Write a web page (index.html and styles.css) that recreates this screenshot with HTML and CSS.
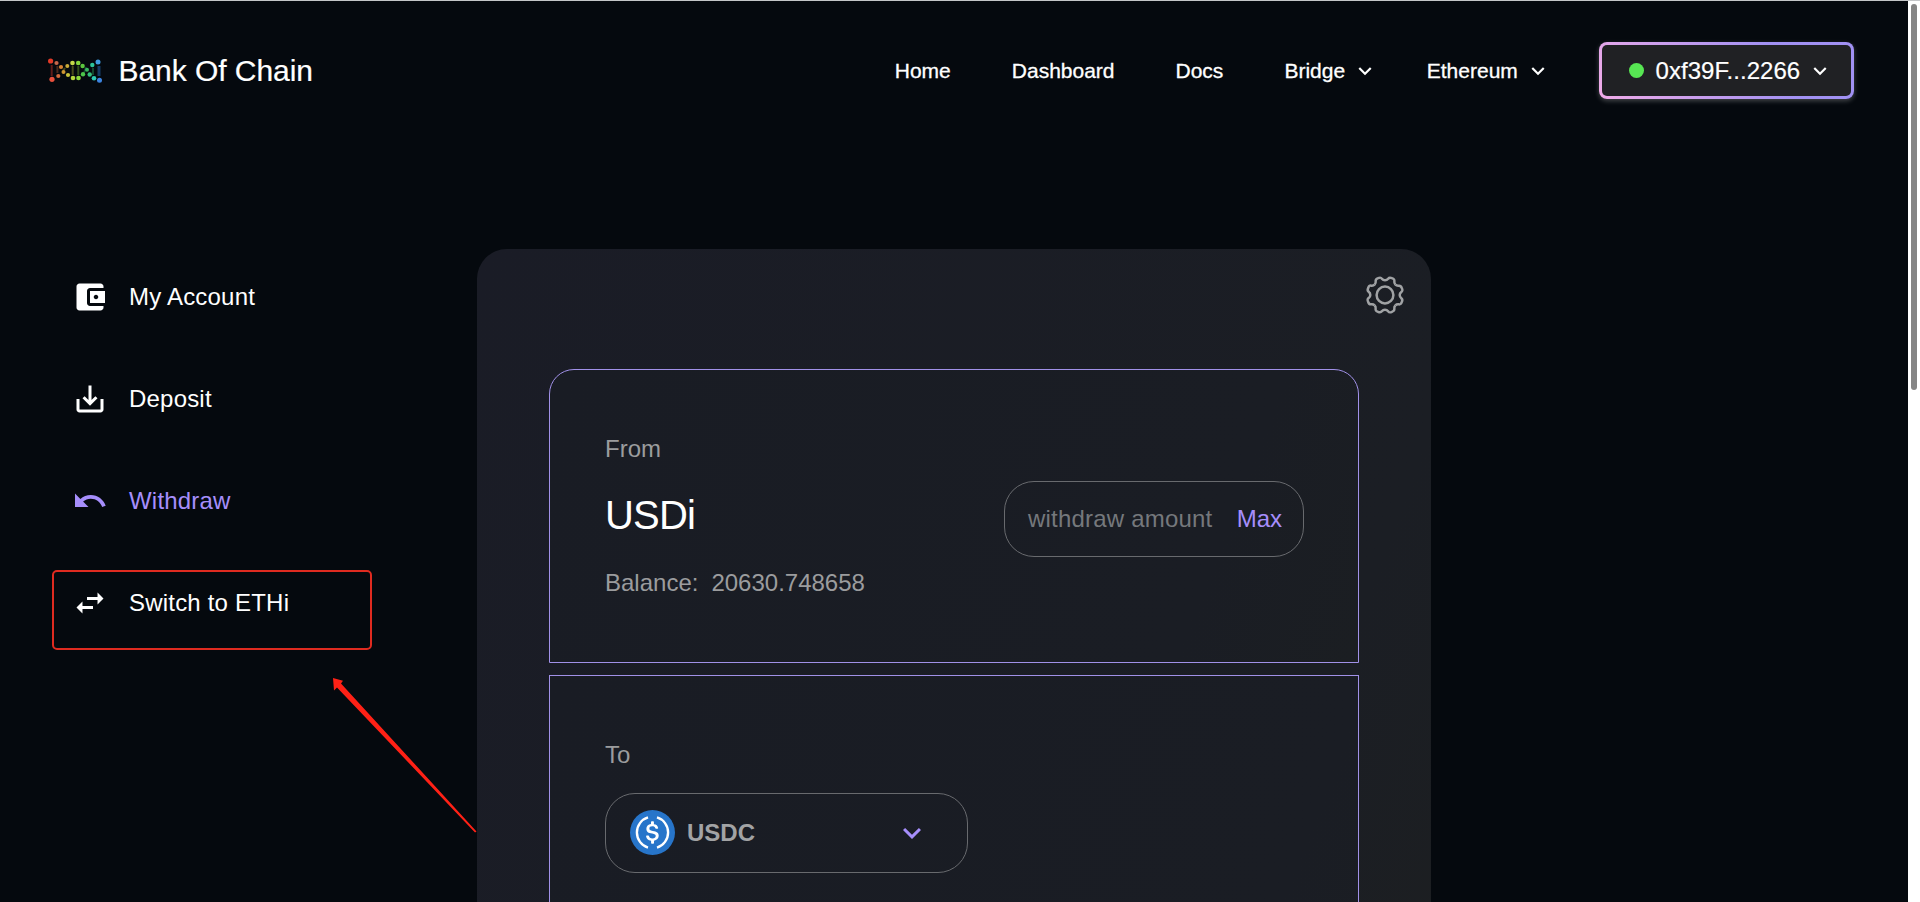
FILE: index.html
```html
<!DOCTYPE html>
<html lang="en">
<head>
<meta charset="utf-8">
<title>Bank Of Chain</title>
<link rel="stylesheet" href="styles.css">
</head>
<body>
<svg class="defs" aria-hidden="true">
  <symbol id="expand" viewBox="0 0 24 24"><path d="M16.59 8.59 12 13.17 7.41 8.59 6 10l6 6 6-6z"/></symbol>
</svg>
<div class="window">
  <div class="app">
    <header class="header">
      <a class="brand">
        <svg class="logo" viewBox="0 0 54 28">
          <g stroke-width="2" opacity=".42">
            <path stroke="#e0392b" d="M3.700 8v11"/>
            <path stroke="#a8552f" d="M9.400 9v7"/>
            <path stroke="#a8a82c" d="M17 11l-2 3M24.700 9v9"/>
            <path stroke="#6fae2c" d="M30.300 9v9"/>
            <path stroke="#2c9c5c" d="M38 10l-2 6M45 11v7"/>
            <path stroke="#2f7fd8" stroke-width="3" d="M51 9v10"/>
          </g>
          <circle cx="2.600" cy="4" r="2.600" fill="#e33a28"/><circle cx="4" cy="22.300" r="2.600" fill="#e8503c"/>
          <circle cx="8.500" cy="6" r="2.100" fill="#c8664a"/><circle cx="10.300" cy="19" r="2.100" fill="#d06a3c"/>
          <circle cx="13" cy="10" r="2.100" fill="#d98432"/><circle cx="15.500" cy="15" r="2" fill="#cf9632"/>
          <circle cx="19.300" cy="9" r="2" fill="#c9ab38"/><circle cx="20" cy="18" r="2.100" fill="#c9c43a"/>
          <circle cx="24.500" cy="6" r="2.300" fill="#c6d84a"/><circle cx="25" cy="21" r="2.300" fill="#b4d83c"/>
          <circle cx="30.200" cy="6" r="2.300" fill="#86d63c"/><circle cx="30.500" cy="21" r="2.300" fill="#8cdc3c"/>
          <circle cx="34.600" cy="9" r="2.200" fill="#5cc63e"/><circle cx="35" cy="17.300" r="2.200" fill="#4cc64a"/>
          <circle cx="39" cy="12.800" r="2" fill="#38b85e"/><circle cx="41.700" cy="17.500" r="2.200" fill="#34c07c"/>
          <circle cx="44.300" cy="8" r="2.200" fill="#2cc49a"/><circle cx="46" cy="21.300" r="2.300" fill="#2cc8b4"/>
          <circle cx="50" cy="5" r="2.500" fill="#3f9be0"/><circle cx="51.500" cy="23.300" r="2.500" fill="#3c84e0"/>
        </svg>
        <span class="brand-name">Bank Of Chain</span>
      </a>
      <nav class="nav">
        <a class="nav-link">Home</a>
        <a class="nav-link">Dashboard</a>
        <a class="nav-link">Docs</a>
        <a class="nav-menu">Bridge <svg class="caret"><use href="#expand"/></svg></a>
        <a class="nav-menu">Ethereum <svg class="caret"><use href="#expand"/></svg></a>
        <button class="wallet"><i class="status"></i><span class="address">0xf39F...2266</span><svg class="caret"><use href="#expand"/></svg></button>
      </nav>
    </header>
    <div class="content">
      <aside class="sidebar">
        <a class="side-item"><svg class="side-icon" viewBox="0 0 24 24"><path d="M21 18v1c0 1.100-.9 2-2 2H5c-1.110 0-2-.9-2-2V5c0-1.100.89-2 2-2h14c1.100 0 2 .9 2 2v1h-9c-1.110 0-2 .9-2 2v8c0 1.100.89 2 2 2h9zm-9-2h10V8H12v8zm4-2.500c-.83 0-1.500-.67-1.500-1.500s.67-1.500 1.500-1.500 1.500.67 1.500 1.500-.67 1.500-1.500 1.500z"/></svg>My Account</a>
        <a class="side-item"><svg class="side-icon" viewBox="0 0 24 24"><path d="M19 12v7H5v-7H3v7c0 1.100.9 2 2 2h14c1.100 0 2-.9 2-2v-7h-2zm-6 .67 2.590-2.580L17 11.500l-5 5-5-5 1.410-1.410L11 12.670V3h2z"/></svg>Deposit</a>
        <a class="side-item active"><svg class="side-icon" viewBox="0 0 24 24"><path d="M12.500 8c-2.650 0-5.050.99-6.900 2.600L2 7v9h9l-3.620-3.620c1.390-1.160 3.160-1.880 5.120-1.880 3.540 0 6.550 2.310 7.600 5.500l2.370-.78C21.080 11.030 17.150 8 12.500 8z"/></svg>Withdraw</a>
        <a class="side-item"><svg class="side-icon" viewBox="0 0 24 24"><path d="M6.990 11 3 15l3.990 4v-3H14v-2H6.990v-3zM21 9l-3.990-4v3H10v2h7.010v3L21 9z"/></svg>Switch to ETHi</a>
      </aside>
      <main class="card">
        <div class="toolbar">
          <svg class="gear" viewBox="-20 -20 40 40">
            <defs><path id="tooth" d="M0-14.700C4.200-14.700 2.400-19 6.960-16.810C11.860-15.140 7.420-13.360 10.390-10.390"/></defs>
            <use href="#tooth"/><use href="#tooth" transform="rotate(45)"/><use href="#tooth" transform="rotate(90)"/><use href="#tooth" transform="rotate(135)"/><use href="#tooth" transform="rotate(180)"/><use href="#tooth" transform="rotate(225)"/><use href="#tooth" transform="rotate(270)"/><use href="#tooth" transform="rotate(315)"/>
            <circle r="8.400"/>
          </svg>
        </div>
        <section class="panel panel-from">
          <p class="label">From</p>
          <div class="row">
            <h2 class="token">USDi</h2>
            <div class="amount"><span class="placeholder">withdraw amount</span><span class="max">Max</span></div>
          </div>
          <p class="label balance"><span>Balance:</span><span>20630.748658</span></p>
        </section>
        <section class="panel panel-to">
          <p class="label">To</p>
          <div class="select">
            <svg class="coin" viewBox="0 0 32 32"><circle cx="16" cy="16" r="16" fill="#2775ca"/><path fill="#fff" transform="translate(-1.600 -1.600) scale(1.100)" d="M20.022 18.124c0-2.124-1.280-2.852-3.840-3.156-1.828-.243-2.193-.728-2.193-1.578 0-.85.61-1.396 1.828-1.396 1.097 0 1.707.364 2.011 1.275a.458.458 0 00.427.303h.975a.416.416 0 00.427-.425v-.06a3.040 3.040 0 00-2.743-2.489V9.142c0-.243-.183-.425-.487-.486h-.915c-.243 0-.426.182-.487.486v1.396c-1.829.242-2.986 1.456-2.986 2.974 0 2.002 1.218 2.791 3.778 3.095 1.707.303 2.255.668 2.255 1.639 0 .97-.853 1.638-2.011 1.638-1.585 0-2.133-.667-2.316-1.578-.06-.242-.244-.364-.427-.364h-1.036a.416.416 0 00-.426.425v.06c.243 1.518 1.219 2.610 3.230 2.914v1.457c0 .242.183.425.487.485h.915c.243 0 .426-.182.487-.485V21.340c1.829-.303 3.047-1.578 3.047-3.217z"/><path fill="none" stroke="#fff" stroke-width="1.700" d="M12.800 5.300A11.200 11.200 0 0 0 12.800 26.700M19.200 5.300A11.200 11.200 0 0 1 19.200 26.700"/></svg>
            <b class="coin-name">USDC</b>
            <svg class="select-caret"><use href="#expand"/></svg>
          </div>
        </section>
      </main>
    </div>
  </div>
  <div class="scrollbar"><div class="thumb"></div></div>
  <div class="highlight"></div>
  <svg class="pointer" viewBox="0 0 150 160"><path d="M3 3 13 5.800 11 8.500 146.500 156.500 145 157.500 7 12.500 4 15.500z"/></svg>
</div>
</body>
</html>
```
FILE: styles.css
```css
* { box-sizing: border-box; }

body {
  margin: 0;
  background: #05090e;
  color: #fff;
  font-family: "Liberation Sans", Arial, sans-serif;
  font-size: 24px;
}

p, h2 { margin: 0; font-weight: 400; }
svg { display: block; flex: none; }
.defs { position: absolute; width: 0; height: 0; }

.window {
  position: relative;
  display: flex;
  height: 902px;
  overflow: hidden;
  border-top: 1px solid #c4c6c8;
}

.app { width: 1908px; overflow: hidden; }

.header {
  display: flex;
  align-items: center;
  justify-content: space-between;
  height: 139px;
  padding: 0 54px 0 47px;
}

.brand { display: flex; align-items: center; gap: 15.500px; }
.logo { width: 56px; height: 28px; fill: none; filter: blur(.5px); }
.brand-name { font-size: 30px; line-height: 34px; letter-spacing: -.05px; -webkit-text-stroke: .2px #fff; }

.nav { display: flex; align-items: center; font-size: 21px; line-height: 24px; -webkit-text-stroke: .3px #fff; }
.nav-link { margin-right: 61px; }
.nav-menu { display: flex; align-items: center; gap: 7px; margin-right: 48.200px; }
.nav-menu:nth-of-type(4) { margin-right: 48.700px; }
.caret { width: 26px; height: 26px; fill: #fff; }

.wallet {
  display: flex;
  align-items: center;
  width: 255px;
  height: 57px;
  padding: 0 0 0 27px;
  border: 3px solid transparent;
  border-radius: 8px;
  background: linear-gradient(#202124, #202124) padding-box, linear-gradient(60deg, #f0abe8, #a191f3 70%) border-box;
  box-shadow: 0 2px 5px rgba(255, 255, 255, .25);
  color: #fff;
  font: inherit;
  font-size: 24px;
  -webkit-text-stroke: .2px #fff;
}
.status { width: 15px; height: 15px; margin-right: 11.500px; border-radius: 50%; background: #57e653; }
.address { width: 151px; letter-spacing: .05px; text-align: left; }

.content { display: flex; padding-top: 109px; }

.sidebar {
  display: flex;
  flex-direction: column;
  gap: 66px;
  width: 477px;
  padding: 30px 0 0 72px;
  letter-spacing: .2px;
}
.side-item { display: flex; align-items: center; gap: 21px; height: 36px; }
.side-icon { width: 36px; height: 36px; fill: currentColor; }
.active { color: #a68efb; }

.card {
  width: 954px;
  height: 1060px;
  padding: 0 72px;
  border-radius: 30px;
  background: linear-gradient(111deg, #1a1c26, #1b1e24 75%, #1d1f20);
}
.toolbar { display: flex; justify-content: flex-end; height: 120px; padding-top: 26px; margin-right: -45.500px; }
.gear { width: 40px; height: 40px; fill: none; stroke: #a0a2a4; stroke-width: 2.500; }

.panel {
  padding: 0 54px 0 55px;
  border: 1px solid #a191e8;
  background: linear-gradient(111deg, #191c24, #1a1d24 80%, #1b1e22);
}
.panel-from { height: 294px; padding-top: 65px; border-radius: 25px 25px 0 0; }
.panel-to { height: 560px; margin-top: 12px; padding-top: 65px; }
.label { color: #9b9c9e; line-height: 28px; }
.row { display: flex; align-items: center; justify-content: space-between; margin-top: 18px; }
.token { padding-bottom: 8px; font-size: 40px; line-height: 46px; letter-spacing: -.8px; }
.balance { display: flex; gap: 13px; margin-top: 12px; }

.amount {
  display: flex;
  align-items: center;
  justify-content: space-between;
  width: 300px;
  height: 76px;
  padding: 0 21px 0 23px;
  border: 1px solid #686a6e;
  border-radius: 30px;
}
.placeholder { color: #75787c; letter-spacing: .2px; }
.max { color: #a68efb; }

.select {
  display: flex;
  align-items: center;
  width: 363px;
  height: 80px;
  margin-top: 24px;
  padding: 0 37px 0 24px;
  border: 1px solid #686a6e;
  border-radius: 30px;
}
.coin { width: 45px; height: 45px; margin-bottom: 1px; }
.coin-name { margin-left: 12px; color: #a2a3a5; }
.select-caret { width: 36px; height: 36px; margin-left: auto; fill: #a68efb; }

.scrollbar { width: 12px; padding: 3px 3px; background: #fff; }
.thumb { height: 386px; border-radius: 3px; background: #858585; }

/* Callout drawn over the page */
.highlight {
  position: absolute;
  left: 52px;
  top: 569px;
  width: 320px;
  height: 80px;
  border: 2px solid #e02b20;
  border-radius: 5px;
}
.pointer { position: absolute; left: 330px; top: 674px; width: 150px; height: 160px; fill: #ff2116; }
```
